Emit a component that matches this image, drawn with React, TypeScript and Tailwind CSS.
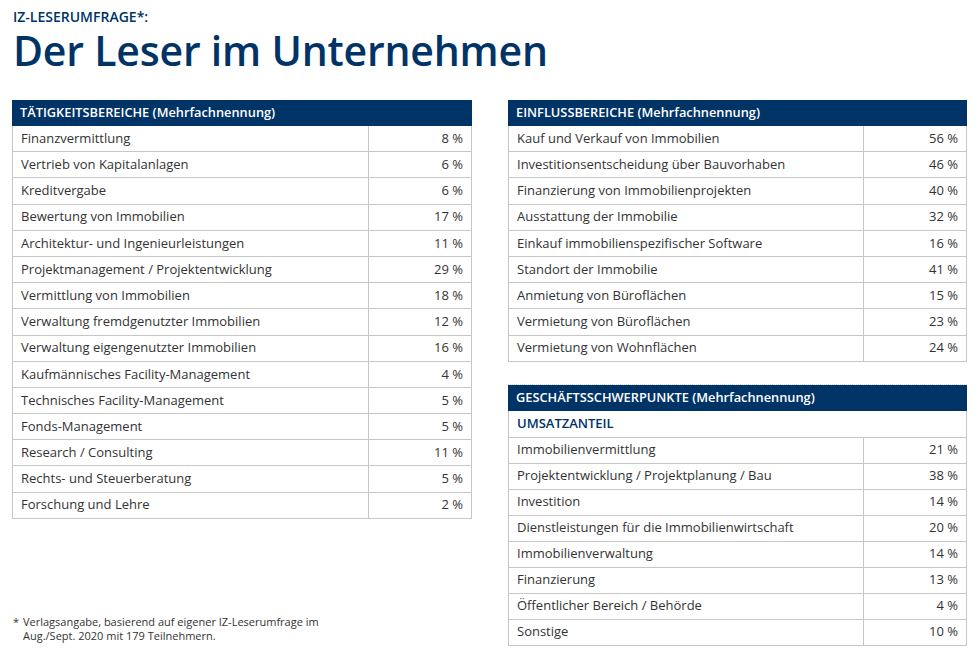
const TAETIGKEIT: [string, string][] = [
  ["Finanzvermittlung", "8 %"],
  ["Vertrieb von Kapitalanlagen", "6 %"],
  ["Kreditvergabe", "6 %"],
  ["Bewertung von Immobilien", "17 %"],
  ["Architektur- und Ingenieurleistungen", "11 %"],
  ["Projektmanagement / Projektentwicklung", "29 %"],
  ["Vermittlung von Immobilien", "18 %"],
  ["Verwaltung fremdgenutzter Immobilien", "12 %"],
  ["Verwaltung eigengenutzter Immobilien", "16 %"],
  ["Kaufmännisches Facility-Management", "4 %"],
  ["Technisches Facility-Management", "5 %"],
  ["Fonds-Management", "5 %"],
  ["Research / Consulting", "11 %"],
  ["Rechts- und Steuerberatung", "5 %"],
  ["Forschung und Lehre", "2 %"],
];

const EINFLUSS: [string, string][] = [
  ["Kauf und Verkauf von Immobilien", "56 %"],
  ["Investitionsentscheidung über Bauvorhaben", "46 %"],
  ["Finanzierung von Immobilienprojekten", "40 %"],
  ["Ausstattung der Immobilie", "32 %"],
  ["Einkauf immobilienspezifischer Software", "16 %"],
  ["Standort der Immobilie", "41 %"],
  ["Anmietung von Büroflächen", "15 %"],
  ["Vermietung von Büroflächen", "23 %"],
  ["Vermietung von Wohnflächen", "24 %"],
];

const SCHWERPUNKTE: [string, string][] = [
  ["Immobilienvermittlung", "21 %"],
  ["Projektentwicklung / Projektplanung / Bau", "38 %"],
  ["Investition", "14 %"],
  ["Dienstleistungen für die Immobilienwirtschaft", "20 %"],
  ["Immobilienverwaltung", "14 %"],
  ["Finanzierung", "13 %"],
  ["Öffentlicher Bereich / Behörde", "4 %"],
  ["Sonstige", "10 %"],
];

function Header({ titel }: { titel: string }) {
  return (
    <div className="flex h-[26px] items-center bg-[#003366] px-[8px] text-[12.8px] font-semibold text-white">
      {titel}
    </div>
  );
}

function Zeilen({ rows, rowH }: { rows: [string, string][]; rowH: string }) {
  return (
    <div className="border-x border-[#c6c6c6]">
      {rows.map(([label, wert]) => (
        <div key={label} className={`flex border-b border-[#c6c6c6] ${rowH}`}>
          <div className="flex flex-1 items-center px-[8px]">{label}</div>
          <div className="flex w-[103px] items-center justify-end border-l border-[#c6c6c6] pr-[8px]">
            {wert}
          </div>
        </div>
      ))}
    </div>
  );
}

export default function App() {
  return (
    <div
      className="h-[659px] w-[980px] bg-white text-[13px] text-[#333]"
      style={{ fontFamily: '"Open Sans", "Noto Sans", sans-serif' }}
    >
      <div className="px-[13px] pt-[8px] text-[#003366]">
        <div className="text-[14px] font-semibold leading-[18px]">IZ-LESERUMFRAGE*:</div>
        <h1 className="mt-[2px] text-[41px] font-semibold leading-[44px] tracking-[-0.2px]">
          Der Leser im Unternehmen
        </h1>
      </div>

      <div className="mt-[28px] flex gap-[36px] pl-[12px]">
        <div className="flex w-[460px] flex-col">
          <Header titel="TÄTIGKEITSBEREICHE (Mehrfachnennung)" />
          <Zeilen rows={TAETIGKEIT} rowH="h-[26.2px]" />
          <div className="mt-auto pb-[3px] pl-[1px] text-[11px] leading-[14px]">
            <div className="flex">
              <span className="w-[10px]">*</span>
              <span>
                Verlagsangabe, basierend auf eigener IZ-Leserumfrage im
                <br />
                Aug./Sept. 2020 mit 179 Teilnehmern.
              </span>
            </div>
          </div>
        </div>

        <div className="flex w-[459px] flex-col">
          <Header titel="EINFLUSSBEREICHE (Mehrfachnennung)" />
          <Zeilen rows={EINFLUSS} rowH="h-[26.2px]" />

          <div className="mt-[22px] border-t border-dotted border-[#d8d8d8]">
            <Header titel="GESCHÄFTSSCHWERPUNKTE (Mehrfachnennung)" />
            <div className="flex h-[27px] items-center border-x border-b border-[#c6c6c6] px-[8px] text-[13px] font-semibold text-[#003366]">
              UMSATZANTEIL
            </div>
            <Zeilen rows={SCHWERPUNKTE} rowH="h-[26px]" />
          </div>
        </div>
      </div>
    </div>
  );
}
